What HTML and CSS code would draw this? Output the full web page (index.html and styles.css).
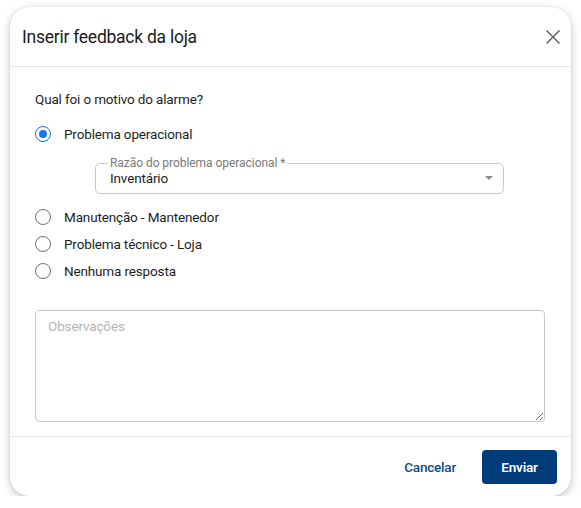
FILE: index.html
```html
<!DOCTYPE html>
<html lang="pt-BR">
<head>
<meta charset="utf-8">
<title>Inserir feedback da loja</title>
<link rel="stylesheet" href="styles.css">
</head>
<body>
<div class="dialog">
  <header class="dialog-header">
    <h1 class="dialog-title">Inserir feedback da loja</h1>
    <button class="close-btn" aria-label="Fechar">
      <svg width="16" height="16" viewBox="0 0 16 16"><path d="M1.5 1.5L14.5 14.5M14.5 1.5L1.5 14.5" stroke="#6b6b6b" stroke-width="1.6" fill="none"/></svg>
    </button>
  </header>
  <div class="dialog-content">
    <p class="question">Qual foi o motivo do alarme?</p>
    <div class="radio-group">
      <label class="radio-row">
        <span class="radio checked"></span>
        <span class="radio-label">Problema operacional</span>
      </label>
      <fieldset class="select-field">
        <legend class="select-legend">Razão do problema operacional *</legend>
        <div class="select-value">
          <span>Inventário</span>
          <span class="select-arrow"></span>
        </div>
      </fieldset>
      <label class="radio-row">
        <span class="radio"></span>
        <span class="radio-label">Manutenção - Mantenedor</span>
      </label>
      <label class="radio-row">
        <span class="radio"></span>
        <span class="radio-label">Problema técnico - Loja</span>
      </label>
      <label class="radio-row">
        <span class="radio"></span>
        <span class="radio-label">Nenhuma resposta</span>
      </label>
    </div>
    <textarea class="notes" placeholder="Observações"></textarea>
  </div>
  <footer class="dialog-footer">
    <button class="btn-text">Cancelar</button>
    <button class="btn-primary">Enviar</button>
  </footer>
</div>
</body>
</html>
```
FILE: styles.css
```css
* { box-sizing: border-box; }
html, body { margin: 0; padding: 0; background: #ffffff; }
body {
  font-family: Roboto, "Liberation Sans", sans-serif;
  color: #212121;
  padding: 7px 10px 0 10px;
}
.dialog {
  width: 561px;
  height: 489px;
  background: #fff;
  border-radius: 20px;
  box-shadow: 0 3px 10px rgba(0,0,0,0.22), 0 0 3px rgba(0,0,0,0.08);
  display: flex;
  flex-direction: column;
}
.dialog-header {
  height: 60px;
  border-bottom: 1px solid #e6e6e6;
  display: flex;
  align-items: center;
  justify-content: space-between;
  padding: 0 6px 0 12px;
}
.dialog-title {
  margin: 0;
  font-size: 17.5px;
  letter-spacing: -0.25px;
  font-weight: 400;
  color: #1b1b1b;
}
.close-btn {
  border: 0;
  background: none;
  padding: 4px;
  display: flex;
  cursor: pointer;
}
.dialog-content {
  padding: 22px 26px 0 25px;
  flex: 1;
  display: flex;
  flex-direction: column;
}
.question {
  margin: 0;
  font-size: 13.5px;
  letter-spacing: -0.15px;
  line-height: 20px;
  color: #1e1e1e;
}
.radio-group {
  margin-top: 11px;
  display: flex;
  flex-direction: column;
}
.radio-row {
  display: flex;
  align-items: center;
  height: 27px;
  gap: 13px;
}
.radio {
  width: 16px;
  height: 16px;
  border-radius: 50%;
  border: 1.7px solid #707070;
  display: flex;
  align-items: center;
  justify-content: center;
}
.radio.checked { border-color: #1a73e8; }
.radio.checked::after {
  content: "";
  width: 8px;
  height: 8px;
  border-radius: 50%;
  background: #1a73e8;
}
.radio-label {
  font-size: 13.5px;
  letter-spacing: -0.15px;
  color: #1e1e1e;
}
.select-field {
  margin: 10px 0 9px 60px;
  width: 409px;
  height: 37px;
  border: 1px solid #c9c9c9;
  border-radius: 5px;
  padding: 0 10px 0 14px;
}
.select-legend {
  margin-left: -2px;
  padding: 0 2px;
  font-size: 12px;
  letter-spacing: -0.05px;
  line-height: 12px;
  color: #7a7a7a;
}
.select-value {
  display: flex;
  align-items: center;
  justify-content: space-between;
  height: 22px;
  margin-top: -2px;
  font-size: 13.5px;
  letter-spacing: -0.15px;
  color: #1e1e1e;
}
.select-arrow {
  width: 0;
  height: 0;
  border-left: 4px solid transparent;
  border-right: 4px solid transparent;
  border-top: 4px solid #8a8a8a;
}
.notes {
  margin-top: 26px;
  width: 510px;
  height: 112px;
  border: 1px solid #c8c8c8;
  border-radius: 4px;
  padding: 7px 12px;
  font-family: Roboto, "Liberation Sans", sans-serif;
  font-size: 13.5px;
  letter-spacing: -0.15px;
  color: #222;
  resize: vertical;
}
.notes::placeholder { color: #b5b5b5; }
.dialog-footer {
  height: 60px;
  border-top: 1px solid #e6e6e6;
  display: flex;
  align-items: center;
  justify-content: flex-end;
  padding: 0 14px 0 0;
  gap: 18px;
}
.btn-text {
  border: 0;
  background: none;
  font-family: Roboto, "Liberation Sans", sans-serif;
  font-size: 13.5px;
  letter-spacing: -0.2px;
  font-weight: 500;
  color: #0b4d86;
  padding: 8px 8px;
  cursor: pointer;
}
.btn-primary {
  border: 0;
  background: #003b7a;
  color: #fff;
  font-family: Roboto, "Liberation Sans", sans-serif;
  font-size: 13.5px;
  letter-spacing: -0.2px;
  font-weight: 600;
  width: 75px;
  height: 34px;
  border-radius: 4px;
  cursor: pointer;
}
```
